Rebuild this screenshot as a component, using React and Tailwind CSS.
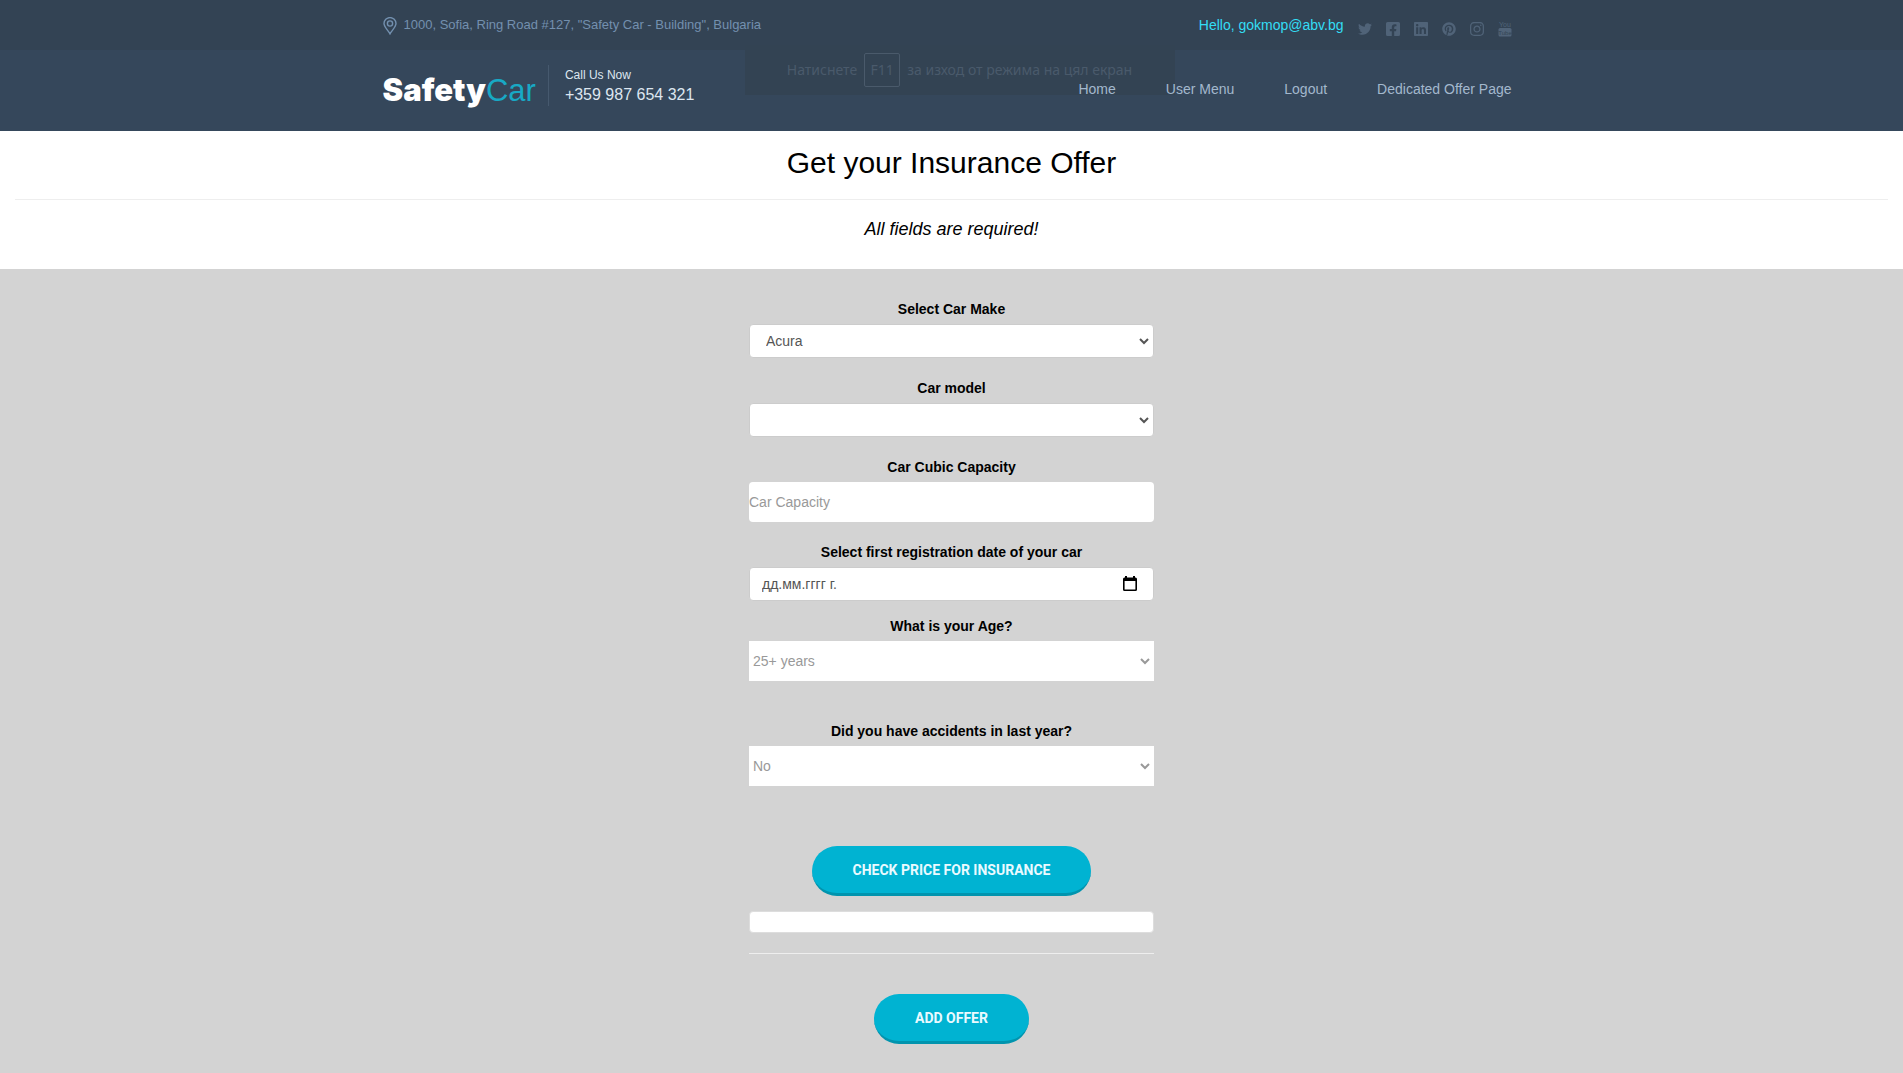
import React from "react";
import { FaTwitter, FaFacebookSquare, FaLinkedin, FaPinterest, FaInstagram } from "react-icons/fa";

function PinIcon() {
  return (
    <svg className="h-[18px] w-[14px]" viewBox="0 0 14 18" fill="none" stroke="currentColor" strokeWidth="1.4" aria-hidden="true">
      <path d="M7 16.800C5.200 13.400 1 10 1 6.600a6 6 0 0 1 12 0C13 10 8.800 13.400 7 16.800Z" />
      <circle cx="7" cy="6.500" r="2.600" />
    </svg>
  );
}

function YoutubeIcon({ className }) {
  return (
    <svg className={"h-4 w-3.5 " + className} viewBox="0 0 14 16" fontFamily="Liberation Sans, sans-serif" aria-hidden="true">
      <text x="7" y="6" textAnchor="middle" fontSize="7" fill="currentColor">You</text>
      <rect x="0.5" y="7" width="13" height="8.5" rx="1.5" fill="currentColor" />
      <text x="7" y="13.5" textAnchor="middle" fontSize="6" fill="#334354">Tube</text>
    </svg>
  );
}

function Chevron({ className }) {
  return (
    <svg className={"pointer-events-none absolute top-1/2 h-2 w-2.5 -translate-y-1/2 " + className} viewBox="0 0 10 8" fill="none" stroke="currentColor" strokeWidth="2" aria-hidden="true">
      <path d="M1 2l4 4 4-4" />
    </svg>
  );
}

function CalendarIcon() {
  return (
    <svg className="h-4 w-3.5" viewBox="0 0 14 16" aria-hidden="true">
      <path fill="currentColor" fillRule="evenodd" d="M2 0h2v1.500h6V0h2v1.500h.5A1.500 1.500 0 0 1 14 3v10.500a1.500 1.500 0 0 1-1.500 1.500h-11A1.500 1.500 0 0 1 0 13.500V3a1.500 1.500 0 0 1 1.500-1.500H2ZM1.600 5v8.400h10.800V5Z" />
    </svg>
  );
}

const social = [
  ["Twitter", FaTwitter, "text-sm"],
  ["Facebook", FaFacebookSquare, "text-base"],
  ["LinkedIn", FaLinkedin, "text-base"],
  ["Pinterest", FaPinterest, "text-sm"],
  ["Instagram", FaInstagram, "text-base"],
  ["YouTube", YoutubeIcon, "text-sm"],
];

const labelClass = "block text-center text-sm leading-5 font-bold text-black";
const boxClass = "h-[34px] w-full appearance-none rounded-sm border border-[#cccccc] bg-white text-sm text-[#555555]";
const tallClass = "block h-10 w-full appearance-none bg-white text-sm text-[#999999]";
const buttonClass = "h-[50px] rounded-full border-b-3 border-[#0094ae] bg-[#00b3d2] px-[41px] font-[Roboto,sans-serif] text-sm font-bold text-[#eafaff]";

function Select({ id, label, options, plain }) {
  return (
    <div>
      <label htmlFor={id} className={labelClass}>{label}</label>
      <div className="relative mt-[5px]">
        <select id={id} className={plain ? tallClass + " pl-1" : boxClass + " block pl-4"}>
          {options.map((o) => <option key={o}>{o}</option>)}
        </select>
        <Chevron className={plain ? "right-1 text-[#999999]" : "right-[5px] text-[#555555]"} />
      </div>
    </div>
  );
}

export default function App() {
  return (
    <div className="flex min-h-screen flex-col bg-[#d3d3d3] font-['Liberation_Sans',Arial,sans-serif] text-sm">
      <header className="relative bg-[#35475b]">
        <div className="bg-[#334354]">
          <div className="mx-auto flex h-[50px] max-w-[1170px] items-center justify-between pr-[25px] pl-4">
            <p className="flex items-center gap-[7px] pt-0.5 text-[13px] text-[#7390af]">
              <PinIcon />
              <span className="pb-0.5">1000, Sofia, Ring Road #127, "Safety Car - Building", Bulgaria</span>
            </p>
            <div className="flex items-center gap-3.5">
              <a href="#account" className="text-[#33ddf5]">Hello, gokmop@abv.bg</a>
              <nav aria-label="Social" className="flex items-center gap-3.5 pt-2 text-[#506378]">
                {social.map(([name, Icon, size]) => (
                  <a key={name} href="#social" aria-label={name} className={"flex w-3.5 justify-center " + size}>
                    <Icon className="shrink-0" />
                  </a>
                ))}
              </nav>
            </div>
          </div>
        </div>
        <div className="mx-auto flex h-[81px] max-w-[1170px] items-start justify-between pr-[25px] pl-4">
          <div className="flex pt-[15px]">
            <a href="#home" className="flex items-baseline border-r border-[#46596e] pt-2.5 pr-3 text-[31px] leading-[30px] text-[#18a9c5]">
              <span className="font-[Inter,sans-serif] font-black text-white">Safety</span>
              <span>Car</span>
            </a>
            <div className="pl-4 text-[#dde6f0]">
              <p className="text-xs leading-5">Call Us Now</p>
              <p className="text-base leading-5">+359 987 654 321</p>
            </div>
          </div>
          <nav aria-label="Main" className="relative z-10 flex gap-[50px] pt-[29px] text-sm leading-5 text-[#a3b8cd]">
            <a href="#home">Home</a>
            <a href="#menu">User Menu</a>
            <a href="#logout">Logout</a>
            <a href="#offer">Dedicated Offer Page</a>
          </nav>
        </div>
        <div className="absolute top-[45px] left-1/2 ml-2 flex h-[50px] w-[430px] -translate-x-1/2 items-center justify-center gap-[7px] bg-[#334353] font-['Noto_Sans',sans-serif] text-sm text-[#4a5a6b]">
          <span>Натиснете</span>
          <kbd className="flex h-[34px] w-9 items-center justify-center rounded-xs border border-[#4a5a6b] font-['Noto_Sans',sans-serif]">F11</kbd>
          <span>за изход от режима на цял екран</span>
        </div>
      </header>

      <section className="bg-white px-[15px] pt-3 pb-[30px] text-center text-black">
        <h1 className="text-[30px] leading-10">Get your Insurance Offer</h1>
        <hr className="mt-4 border-[#eeeeee]" />
        <p className="mt-[19px] text-lg leading-5 italic">All fields are required!</p>
      </section>

      <form className="mx-auto flex w-full max-w-[405px] flex-col pt-[30px] pb-7">
        <Select id="make" label="Select Car Make" options={["Acura"]} />
        <div className="mt-5">
          <Select id="model" label="Car model" options={[""]} />
        </div>
        <div className="mt-5">
          <label htmlFor="capacity" className={labelClass}>Car Cubic Capacity</label>
          <input id="capacity" placeholder="Car Capacity" className={tallClass + " mt-[5px] rounded-sm placeholder:text-[#999999]"} />
        </div>
        <div className="mt-5">
          <label htmlFor="date" className={labelClass}>Select first registration date of your car</label>
          <div className="relative mt-[5px]">
            <input id="date" placeholder="дд.мм.гггг г." className={boxClass + " block pl-3 placeholder:text-[#555555]"} />
            <button type="button" aria-label="Open calendar" className="absolute top-[9px] right-[17px] text-black"><CalendarIcon /></button>
          </div>
        </div>
        <div className="mt-[15px]">
          <Select id="age" label="What is your Age?" options={["25+ years"]} plain />
        </div>
        <div className="mt-10">
          <Select id="accidents" label="Did you have accidents in last year?" options={["No"]} plain />
        </div>
        <button type="button" className={buttonClass + " mt-[60px] self-center"}>CHECK PRICE FOR INSURANCE</button>
        <input aria-label="Insurance price" readOnly className="mt-[15px] h-[22px] rounded-sm border border-[#dddddd] bg-white" />
        <hr className="mt-5 border-[#eeeeee]" />
        <button type="submit" className={buttonClass + " mt-10 self-center"}>ADD OFFER</button>
      </form>
    </div>
  );
}
